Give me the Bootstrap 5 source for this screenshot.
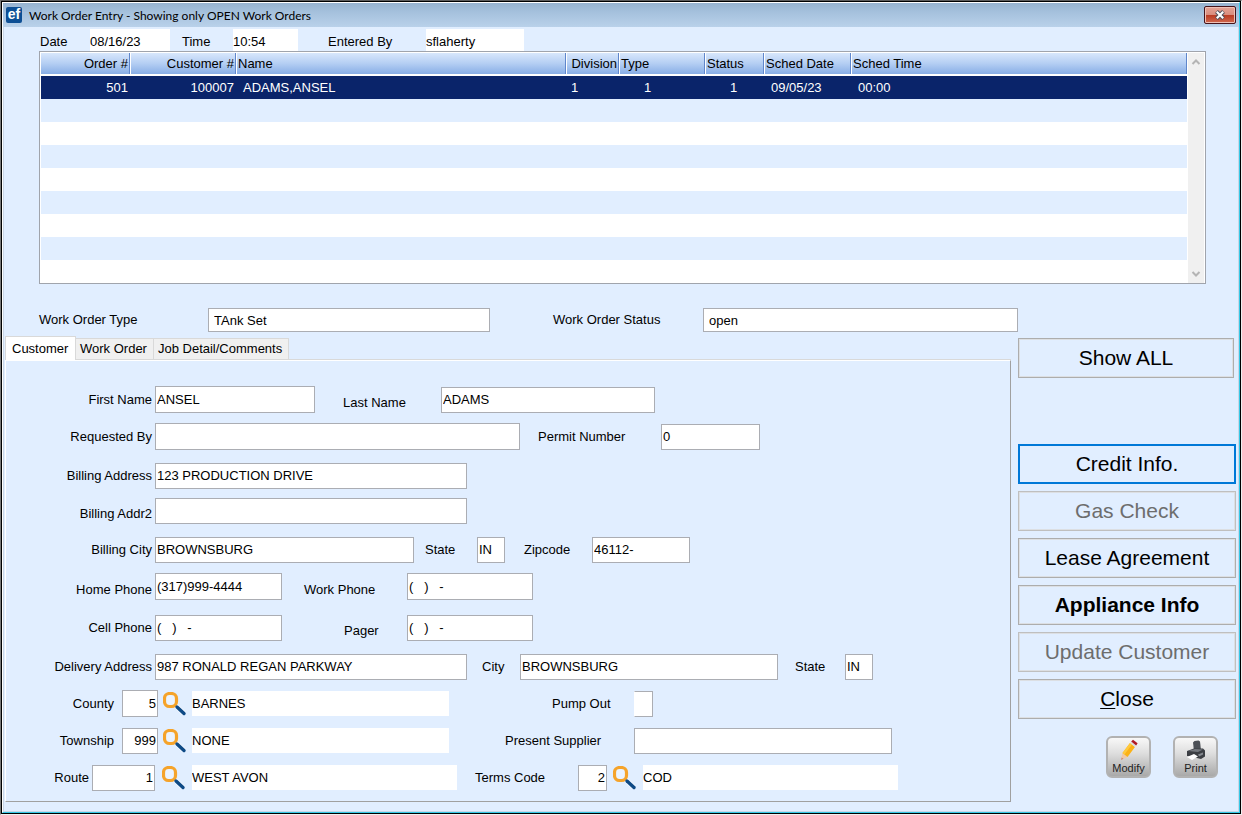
<!DOCTYPE html>
<html lang="en">
<head>
<meta charset="utf-8">
<meta name="viewport" content="width=device-width, initial-scale=1">
<title>Work Order Entry</title>
<link href="https://cdn.jsdelivr.net/npm/bootstrap@5.3.0/dist/css/bootstrap.min.css" rel="stylesheet">
<style>
  :root { --face: #e1eeff; --edge: #abadb3; }
  body { font: 13px/20px "Liberation Sans", Arial, sans-serif; color: #000; background: #f0f0f0; }
  .frame-outer { min-height: 100vh; border: 1px solid; border-color: #5c5c5c #f0f0f0 #f0f0f0 #7a7a7a; background: #000; padding: 1px; }
  .frame-inner { border: 1px solid; border-color: #fff #35c8e6 #35c8e6 #fff; background: var(--face); }
  .client { border: 1px solid #c9d6e6; border-top: 0; padding-left: 1px; padding-right: 2px; }

  .titlebar { height: 24px; padding: 0 3px; background: linear-gradient(#97b3d0, #a4c0dc 35%, #b9d1ea); font: 12px/18px Lato, "Open Sans", sans-serif; }
  .logo { width: 16px; height: 16px; border-radius: 2px; background: #0d4f95; color: #fff; font: bold 14px/15px "Liberation Sans", sans-serif; text-align: center; }
  .caption { margin-left: 7px; padding-top: 2px; }
  .btn-x { width: 32px; height: 18px; padding: 0; border: 1px solid #46131a; border-radius: 2px; background: linear-gradient(#e5a396, #d98d7e 48%, #b93a22 50%, #d0684e); box-shadow: inset 0 0 0 1px #efc0b6; line-height: 0; }

  label, .tab-item { white-space: nowrap; }
  .box, .flat { width: 100%; min-width: 0; height: 26px; padding: 0 1px; border: 1px solid var(--edge); border-radius: 0; background: #fff; color: #000; outline: 0; }
  .flat { border: 0; padding: 0; height: 25px; }
  .num { text-align: right; }
  .tall { height: 27px; }
  .open-left { border-left-color: #fff; }

  .stamp { height: 24px; padding: 2px 0 0 35px; line-height: 22px; }
  .stamp .flat { height: 22px; padding-top: 4px; flex: none; }
  .stamp label { padding-top: 4px; }
  .w-date { width: 80px; } .w-time { width: 65px; } .w-user { width: 98px; }
  .l-date { width: 50px; } .l-time { width: 51px; margin-left: 12px; } .l-user { width: 98px; margin-left: 30px; }

  .listbox { margin: 0 30px 0 34px; border: 1px solid #a0a4ac; background: #fff; padding: 1px 1px 0; }
  .orders { table-layout: fixed; width: 100%; border-collapse: separate; border-spacing: 0; }
  .orders th { height: 21px; padding: 0 1px; line-height: 21px; font-weight: 400; border-right: 1px solid #5f86cb; border-left: 1px solid #fff; background: linear-gradient(#d8e7fc, #b4cef3 50%, #88aee6); white-space: nowrap; }
  .orders th:first-child { border-left: 0; }
  .orders td { height: 23px; padding: 0 2px; line-height: 23px; white-space: nowrap; }
  .orders .spacer td { height: 2px; line-height: 0; padding: 0; }
  .orders .band td { background: var(--face); }
  .orders .picked td { background: #0a246a; color: #fff; }
  .orders .in-5 { padding-left: 5px; } .orders .in-7 { padding-left: 7px; } .orders .in-25 { padding-left: 25px; }
  .scroller { width: 16px; margin-left: 1px; background: #f0f0f0; }
  .scroller button { height: 18px; padding: 0; border: 0; background: none; line-height: 0; }

  .kind { display: grid; grid-template-columns: 169fr 282fr 63fr 150fr 315fr 218px; padding: 24px 0 0 34px; }
  .kind .box { height: 24px; padding-left: 5px; }

  .tab-item { height: 21px; padding: 0 6px 0 4px; border: 1px solid #d9d9d9; border-bottom: 0; border-left: 0; background: #f0f0f0; color: #000; }
  .tab-item.active { height: 24px; width: 71px; padding: 1px 6px 0; border-left: 1px solid #d9d9d9; background: #fff; text-align: left; }
  .pane { border: 1px solid; border-color: #fff #a0a0a0 #a0a0a0 #fff; padding: 25px 0 10px; box-shadow: 0 -1px #d9d9d9; }
  .tabs { position: relative; z-index: 1; height: 24px; padding-bottom: 1px; }

  /* Column shares of every line add up to 1004, the pane's design width. */
  .line { display: grid; align-items: center; height: 27px; }
  .line + .line { margin-top: 10px; }
  .line + .line.gap-s { margin-top: 8px; }
  .line + .line.gap-m { margin-top: 12px; }
  .line + .line.gap-l { margin-top: 14px; }
  .line-name   { grid-template-columns: 149fr 160fr 28fr 98fr 214fr 355fr; }
  .line-req    { grid-template-columns: 149fr 365fr 18fr 123fr 99fr 250fr; }
  .line-addr   { grid-template-columns: 149fr 312fr 543fr; }
  .line-city   { grid-template-columns: 149fr 259fr 11fr 52fr 28fr 19fr 68fr 98fr 320fr; }
  .line-phone  { grid-template-columns: 149fr 127fr 22fr 103fr 126fr 477fr; }
  .line-pager  { grid-template-columns: 149fr 127fr 62fr 63fr 126fr 477fr; }
  .line-deliv  { grid-template-columns: 149fr 312fr 15fr 38fr 258fr 17fr 50fr 28fr 137fr; }
  .line-county { grid-template-columns: 116fr 36fr 34fr 257fr 103fr 82fr 19fr 357fr; }
  .line-town   { grid-template-columns: 116fr 36fr 34fr 257fr 56fr 129fr 258fr 118fr; }
  .line-route  { grid-template-columns: 86fr 63fr 37fr 265fr 18fr 103fr 29fr 36fr 255fr 112fr; }
  .lead-label { text-align: right; padding-right: 3px; }
  .lead-label.wide { padding-right: 8px; }
  .low { padding-top: 6px; }
  .find { padding: 0; border: 0; background: none; line-height: 0; justify-self: center; }

  .side { width: 218px; margin-left: 7px; padding-top: 2px; }
  .cmd { height: 40px; padding: 0; border: 1px solid #adadad; border-radius: 0; box-shadow: inset 0 0 0 1px #dcdfe3; background: var(--face); color: #000; font-size: 21px; line-height: 36px; }
  .cmd:disabled { border-color: #bfbfbf; background: var(--face); color: #6d6d6d; opacity: 1; }
  .cmd.focused { border: 2px solid #0078d7; box-shadow: none; line-height: 34px; }
  .cmd u { text-decoration-thickness: 1px; text-underline-offset: 2px; }
  .cmd-all { margin: 0 2px 66px 0; }
  .cmds { gap: 7px; }
  .tools { gap: 22px; padding: 17px 18px 0 0; }
  .tool { width: 45px; height: 42px; padding: 1px 0 0; border: 2px solid #b2b2b2; border-radius: 6px; background: linear-gradient(#f8f8f8, #dedede 40%, #a9a9a9); font-size: 11px; line-height: 15px; color: #222; }
</style>
</head>
<body>
<svg width="0" height="0" class="position-absolute" aria-hidden="true">
  <symbol id="lens" viewBox="1 0 24 24">
    <path d="M13 13l9 8.500" stroke="#fff" stroke-width="5" opacity=".7"/>
    <rect x="2.500" y="1.500" width="12" height="13" rx="5" fill="#eaf3ff" stroke="#f5a32a" stroke-width="3.200"/>
    <path d="M15 15l7 6.500" stroke="#0e4a86" stroke-width="3.400" stroke-linecap="round"/>
  </symbol>
</svg>
<div class="frame-outer d-flex flex-column">
<div class="frame-inner flex-grow-1 d-flex flex-column">
  <header class="titlebar d-flex align-items-center">
    <span class="logo">ef</span>
    <span class="caption flex-grow-1">Work Order Entry - Showing only OPEN Work Orders</span>
    <button class="btn-x" aria-label="Close window">
      <svg width="12" height="10" viewBox="0 0 12 10"><path d="M2.500 1.500l7 7M9.500 1.500l-7 7" stroke="#4a4f5c" stroke-width="4"/><path d="M2.800 1.800l6.400 6.400M9.200 1.800l-6.400 6.400" stroke="#fff" stroke-width="2.200"/></svg>
    </button>
  </header>

  <main class="client flex-grow-1">
    <div class="stamp d-flex align-items-center">
      <label class="l-date" for="date">Date</label><input id="date" class="flat w-date" value="08/16/23">
      <label class="l-time" for="time">Time</label><input id="time" class="flat w-time" value="10:54">
      <label class="l-user" for="user">Entered By</label><input id="user" class="flat w-user" value="sflaherty">
    </div>

    <div class="listbox d-flex">
      <div class="flex-grow-1">
        <table class="orders">
          <colgroup><col style="width:89px"><col style="width:106px"><col style="width:330px"><col style="width:53px"><col style="width:86px"><col style="width:59px"><col style="width:87px"><col></colgroup>
          <thead><tr><th class="text-end">Order #</th><th class="text-end">Customer #</th><th>Name</th><th class="text-end">Division</th><th>Type</th><th>Status</th><th>Sched Date</th><th>Sched Time</th></tr></thead>
          <tbody>
            <tr class="spacer"><td colspan="8"></td></tr>
            <tr class="picked"><td class="text-end">501</td><td class="text-end">100007</td><td class="in-7">ADAMS,ANSEL</td><td class="in-5">1</td><td class="in-25">1</td><td class="in-25">1</td><td class="in-7">09/05/23</td><td class="in-7">00:00</td></tr>
            <tr class="band"><td colspan="8"></td></tr>
            <tr><td colspan="8"></td></tr>
            <tr class="band"><td colspan="8"></td></tr>
            <tr><td colspan="8"></td></tr>
            <tr class="band"><td colspan="8"></td></tr>
            <tr><td colspan="8"></td></tr>
            <tr class="band"><td colspan="8"></td></tr>
            <tr><td colspan="8"></td></tr>
          </tbody>
        </table>
      </div>
      <div class="scroller flex-shrink-0 d-flex flex-column justify-content-between">
        <button aria-label="Scroll up"><svg width="10" height="8" viewBox="0 0 10 8"><path d="M1.500 6L5 2.500 8.500 6" fill="none" stroke="#b4b4b4" stroke-width="2"/></svg></button>
        <button aria-label="Scroll down"><svg width="10" height="8" viewBox="0 0 10 8"><path d="M1.500 2L5 5.500 8.500 2" fill="none" stroke="#b4b4b4" stroke-width="2"/></svg></button>
      </div>
    </div>

    <div class="kind align-items-center">
      <label for="wotype">Work Order Type</label><input id="wotype" class="box" value="TAnk Set">
      <span></span><label for="wostatus">Work Order Status</label><input id="wostatus" class="box" value="open">
    </div>

    <div class="d-flex pt-1">
      <div class="flex-grow-1">
        <div class="tabs d-flex align-items-end" role="tablist">
          <button class="tab-item active align-self-start" role="tab" aria-selected="true">Customer</button>
          <button class="tab-item" role="tab">Work Order</button>
          <button class="tab-item" role="tab">Job Detail/Comments</button>
        </div>
        <form class="pane">
          <div class="line line-name">
            <label class="lead-label" for="first">First Name</label><input id="first" class="box tall" value="ANSEL">
            <span></span><label class="low" for="last">Last Name</label><input id="last" class="box" value="ADAMS">
          </div>
          <div class="line line-req">
            <label class="lead-label" for="req">Requested By</label><input id="req" class="box tall">
            <span></span><label for="permit">Permit Number</label><input id="permit" class="box" value="0">
          </div>
          <div class="line line-addr gap-m">
            <label class="lead-label" for="addr">Billing Address</label><input id="addr" class="box" value="123 PRODUCTION DRIVE">
          </div>
          <div class="line line-addr gap-s">
            <label class="lead-label low" for="addr2">Billing Addr2</label><input id="addr2" class="box">
          </div>
          <div class="line line-city gap-m">
            <label class="lead-label" for="bcity">Billing City</label><input id="bcity" class="box" value="BROWNSBURG">
            <span></span><label for="bstate">State</label><input id="bstate" class="box" value="IN">
            <span></span><label for="zip">Zipcode</label><input id="zip" class="box" value="46112-">
          </div>
          <div class="line line-phone">
            <label class="lead-label low" for="home">Home Phone</label><input id="home" class="box tall" value="(317)999-4444">
            <span></span><label class="low" for="work">Work Phone</label><input id="work" class="box tall" value="(   )   -">
          </div>
          <div class="line line-pager gap-l">
            <label class="lead-label" for="cell">Cell Phone</label><input id="cell" class="box" value="(   )   -">
            <span></span><label class="low" for="pager">Pager</label><input id="pager" class="box" value="(   )   -">
          </div>
          <div class="line line-deliv gap-m">
            <label class="lead-label" for="daddr">Delivery Address</label><input id="daddr" class="box" value="987 RONALD REGAN PARKWAY">
            <span></span><label for="dcity">City</label><input id="dcity" class="box" value="BROWNSBURG">
            <span></span><label for="dstate">State</label><input id="dstate" class="box" value="IN">
          </div>
          <div class="line line-county">
            <label class="lead-label wide" for="county">County</label><input id="county" class="box tall num" value="5">
            <button type="button" class="find" aria-label="Find county"><svg width="24" height="24"><use href="#lens"/></svg></button>
            <input class="flat" aria-label="County name" value="BARNES">
            <span></span><label for="pump">Pump Out</label><input id="pump" class="box open-left">
          </div>
          <div class="line line-town">
            <label class="lead-label wide" for="town">Township</label><input id="town" class="box num" value="999">
            <button type="button" class="find" aria-label="Find township"><svg width="24" height="24"><use href="#lens"/></svg></button>
            <input class="flat" aria-label="Township name" value="NONE">
            <span></span><label for="supplier">Present Supplier</label><input id="supplier" class="box">
          </div>
          <div class="line line-route">
            <label class="lead-label" for="route">Route</label><input id="route" class="box num" value="1">
            <button type="button" class="find" aria-label="Find route"><svg width="24" height="24"><use href="#lens"/></svg></button>
            <input class="flat" aria-label="Route name" value="WEST AVON">
            <span></span><label for="terms">Terms Code</label><input id="terms" class="box num" value="2">
            <button type="button" class="find" aria-label="Find terms code"><svg width="24" height="24"><use href="#lens"/></svg></button>
            <input class="flat" aria-label="Terms description" value="COD">
          </div>
        </form>
      </div>

      <aside class="side flex-shrink-0 d-flex flex-column">
        <button class="btn cmd cmd-all">Show ALL</button>
        <div class="cmds d-grid">
          <button class="btn cmd focused">Credit Info.</button>
          <button class="btn cmd" disabled>Gas Check</button>
          <button class="btn cmd">Lease Agreement</button>
          <button class="btn cmd fw-bold">Appliance Info</button>
          <button class="btn cmd" disabled>Update Customer</button>
          <button class="btn cmd"><u>C</u>lose</button>
        </div>
        <div class="tools d-flex justify-content-end">
          <button class="tool d-flex flex-column align-items-center">
            <svg width="20" height="22" viewBox="0 0 20 22"><path d="M2 21l1.500-7 5 4z" fill="#f1c9a5"/><path d="M2 21l.6-2.600 1.900 1.300z" fill="#c98a76"/><path d="M3.500 14L11 4l5 4-7.500 10z" fill="#fbb216"/><path d="M3.500 14L11 4l2 1.500-7.600 10z" fill="#ffc93d"/><path d="M11 4l1.200-1.600 5 4L16 8z" fill="#ddd"/><path d="M12.200 2.400L14 .8l4.600 3.400-1.400 2.200z" fill="#b01824"/></svg>
            <span>Modify</span>
          </button>
          <button class="tool d-flex flex-column align-items-center">
            <svg width="22" height="22" viewBox="0 0 22 22"><path d="M8 3.500l1.500-1.500 4-.5 1.500 1 1 8.500-7 1z" fill="#4c5056"/><path d="M2 12l7-2.500 9 0 2 2v6l-4 2.500-8-2-6-1z" fill="#3b3e43"/><path d="M3 12l7-2 8 .5-5 2.500z" fill="#75797f"/><path d="M2 18l7-3 4 2.500L7 21z" fill="#fff"/><path d="M13 15.500l5-2v2l-4 2z" fill="#85898f"/></svg>
            <span>Print</span>
          </button>
        </div>
      </aside>
    </div>
  </main>
</div>
</div>
<script src="https://cdn.jsdelivr.net/npm/bootstrap@5.3.0/dist/js/bootstrap.bundle.min.js"></script>
</body>
</html>
